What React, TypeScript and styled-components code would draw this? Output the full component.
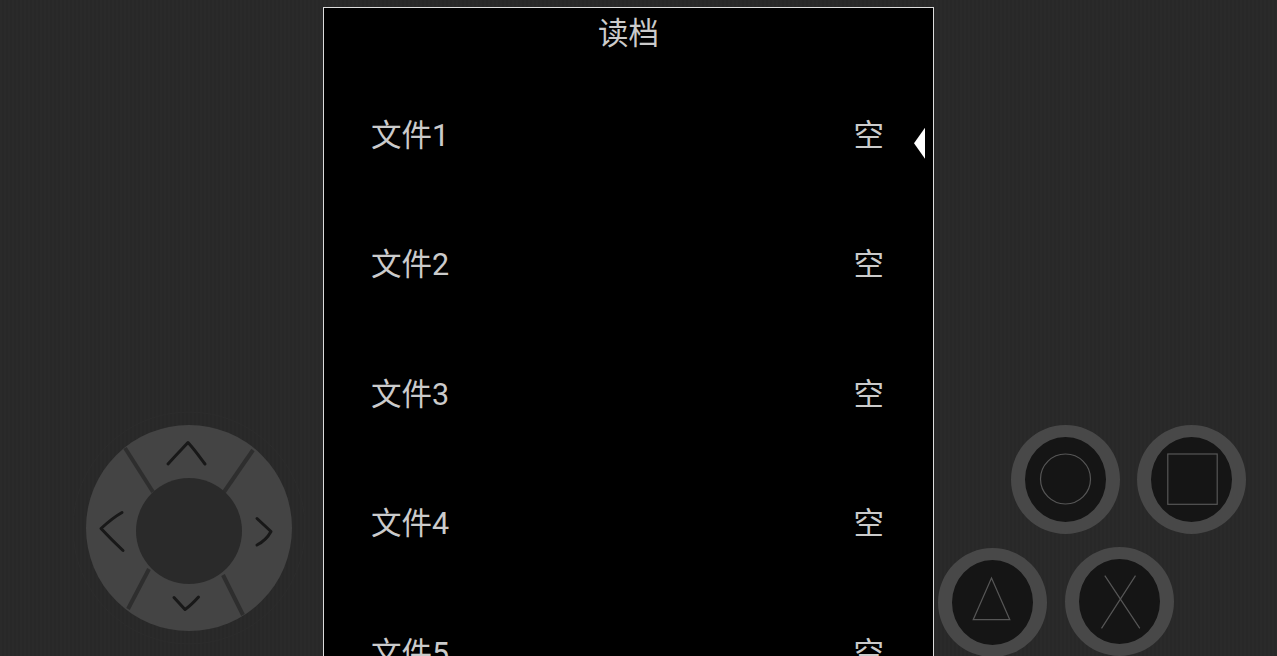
import React from "react";
import styled, { createGlobalStyle } from "styled-components";

const GlobalStyle = createGlobalStyle`
  html, body {
    margin: 0;
    padding: 0;
    background: #292929;
    overflow: hidden;
  }
`;

const Page = styled.div`
  display: grid;
  grid-template-columns: 323px 611px 343px;
  grid-template-rows: 656px;
  height: 656px;
  overflow: hidden;
  font-family: Roboto, "Noto Sans CJK SC", sans-serif;
  background-color: #2a2a2a;
  background-image: repeating-linear-gradient(
    90deg,
    transparent 0 2px,
    rgba(0, 0, 0, 0.05) 2px 4px
  );
`;

const LeftPad = styled.div`
  display: flex;
  align-items: flex-end;
  padding-left: 60px;
`;

const Screen = styled.main`
  box-sizing: border-box;
  margin-top: 7px;
  height: 720px;
  background: #000;
  border: 1px solid #dcdcdc;
  color: #cbcbcb;
`;

const Title = styled.h1`
  margin: 0 0 8px;
  font-size: 30.5px;
  font-weight: 400;
  line-height: 52px;
  text-align: center;
`;

const Row = styled.div`
  display: flex;
  align-items: center;
  height: 129.5px;
  padding: 0 8px 0 47px;
  font-size: 30.5px;
`;

const RowName = styled.span`
  flex: 1;
`;

const Cursor = styled.span<{ $visible: boolean }>`
  width: 11px;
  height: 31px;
  margin: 21px 0 0 30px;
  background: ${({ $visible }) => ($visible ? "#fff" : "transparent")};
  clip-path: polygon(0 50%, 100% 0, 100% 100%);
`;

const RightPad = styled.div`
  display: flex;
  flex-direction: column;
  gap: 13px;
  padding: 425px 0 0 4px;
`;

const ButtonRow = styled.div<{ $indent: number; $gap: number }>`
  display: flex;
  gap: ${({ $gap }) => $gap}px;
  margin-left: ${({ $indent }) => $indent}px;
`;

const FaceButton = styled.div<{ $drop?: number }>`
  box-sizing: border-box;
  flex: none;
  width: 109px;
  height: 109px;
  margin-top: ${({ $drop }) => $drop ?? 0}px;
  border-style: solid;
  border-color: #484848;
  border-width: 12.5px 14px;
  border-radius: 50%;
  background: #151515;
`;

const Glyph = styled.svg`
  display: block;
  width: 81px;
  height: 84px;
  fill: none;
  stroke: #565656;
  stroke-width: 1.2;
`;

const DpadSvg = styled.svg`
  display: block;
  flex: none;
  width: 260px;
  height: 256px;
`;

const files = ["文件1", "文件2", "文件3", "文件4", "文件5"];

const Dpad = () => (
  <DpadSvg viewBox="60 400 260 256">
    <circle cx="189" cy="528" r="116" fill="none" stroke="#2c2c2c" />
    <circle cx="189" cy="528" r="103" fill="#444" />
    <g stroke="#2e2e2e" strokeWidth="4" fill="none">
      <path d="M125 448 L153 492" />
      <path d="M253 450 L224 492" />
      <path d="M149 569 L128 609" />
      <path d="M223 575 L243 615" />
    </g>
    <circle cx="189" cy="531" r="53" fill="#2a2a2a" />
    <g stroke="#181818" strokeWidth="3" strokeLinecap="round" strokeLinejoin="round" fill="none">
      <path d="M168 464 C176 455 182 449 188 442.5 C194 449 199 456 205 464" />
      <path d="M122 512.5 C114 517 107 523 101 528.5 C108 536 115 543 123 550.5" />
      <path d="M257 518.5 L271 531.5 C268 537 263 542 257 545" />
      <path d="M174 597.5 L185 609.5 C190 606 194 602 198.5 597" />
    </g>
  </DpadSvg>
);

export default function App() {
  return (
    <Page>
      <GlobalStyle />
      <LeftPad>
        <Dpad />
      </LeftPad>
      <Screen>
        <Title>读档</Title>
        {files.map((name, i) => (
          <Row key={name}>
            <RowName>{name}</RowName>
            <span>空</span>
            <Cursor $visible={i === 0} />
          </Row>
        ))}
      </Screen>
      <RightPad>
        <ButtonRow $indent={73} $gap={17}>
          <FaceButton>
            <Glyph viewBox="0 0 81 81">
              <circle cx="40.5" cy="40.5" r="25" />
            </Glyph>
          </FaceButton>
          <FaceButton>
            <Glyph viewBox="0 0 81 81">
              <rect x="16.8" y="15.5" width="49.4" height="50.3" />
            </Glyph>
          </FaceButton>
        </ButtonRow>
        <ButtonRow $indent={0} $gap={18}>
          <FaceButton $drop={1}>
            <Glyph viewBox="0 0 81 81">
              <path d="M39.5 16.5 L21.2 58.2 H57.8 Z" />
            </Glyph>
          </FaceButton>
          <FaceButton>
            <Glyph viewBox="0 0 81 81">
              <path d="M25.8 15.2 L60.8 67.8 M56.5 15.2 L22.5 67.8" />
            </Glyph>
          </FaceButton>
        </ButtonRow>
      </RightPad>
    </Page>
  );
}
